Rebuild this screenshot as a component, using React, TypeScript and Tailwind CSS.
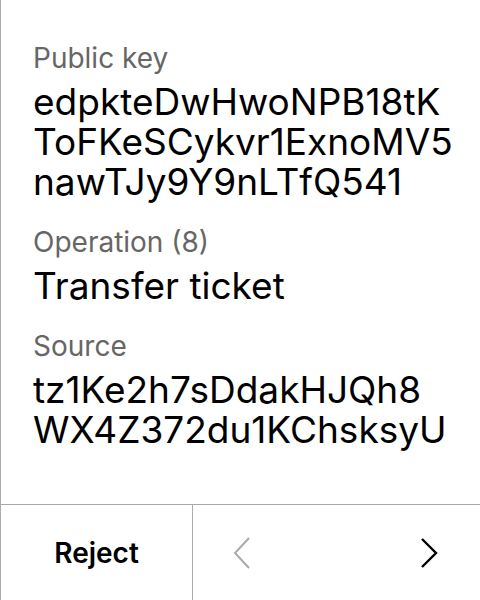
import { useState } from "react";

// 라벨 + 값 (값은 줄 단위로 끊어서 표시)
const Field = ({ label, lines }: { label: string; lines: string[] }) => (
  <div className="flex flex-col">
    <span className="text-[28px] leading-[34px] text-[#666666]">{label}</span>
    <p className="mt-[7px] text-[37px] leading-[40px] text-black whitespace-pre-line">
      {lines.join("\n")}
    </p>
  </div>
);

const App = () => {
  const [page, setPage] = useState(0);

  return (
    <div
      className="w-[480px] h-[600px] flex flex-col bg-white border-l border-[#aaaaaa]"
      style={{ fontFamily: "Inter, 'Noto Sans', sans-serif" }}
    >
      {/* 내용 */}
      <div className="flex-1 flex flex-col gap-[23px] pl-[32px] pt-[41px] overflow-hidden">
        <Field
          label="Public key"
          lines={["edpkteDwHwoNPB18tK", "ToFKeSCykvr1ExnoMV5", "nawTJy9Y9nLTfQ541"]}
        />
        <Field label="Operation (8)" lines={["Transfer ticket"]} />
        <Field label="Source" lines={["tz1Ke2h7sDdakHJQh8", "WX4Z372du1KChsksyU"]} />
      </div>

      {/* 하단 버튼 */}
      <div className="h-[96px] flex border-t border-[#aaaaaa]">
        <button className="w-[192px] border-r border-[#aaaaaa] text-[28px] font-semibold text-black">
          Reject
        </button>
        <div className="flex-1 flex items-center justify-between pl-[40px] pr-[42px]">
          <button onClick={() => setPage(page > 0 ? page - 1 : 0)} className="p-0">
            <svg width="18" height="32" viewBox="0 0 18 32" fill="none">
              <polyline points="16,1 2,16 16,31" stroke="#aaaaaa" strokeWidth="2" />
            </svg>
          </button>
          <button onClick={() => setPage(page + 1)} className="p-0">
            <svg width="18" height="32" viewBox="0 0 18 32" fill="none">
              <polyline points="2,2 16,16 2,30" stroke="#000000" strokeWidth="2.4" />
            </svg>
          </button>
        </div>
      </div>
    </div>
  );
};

export default App;
